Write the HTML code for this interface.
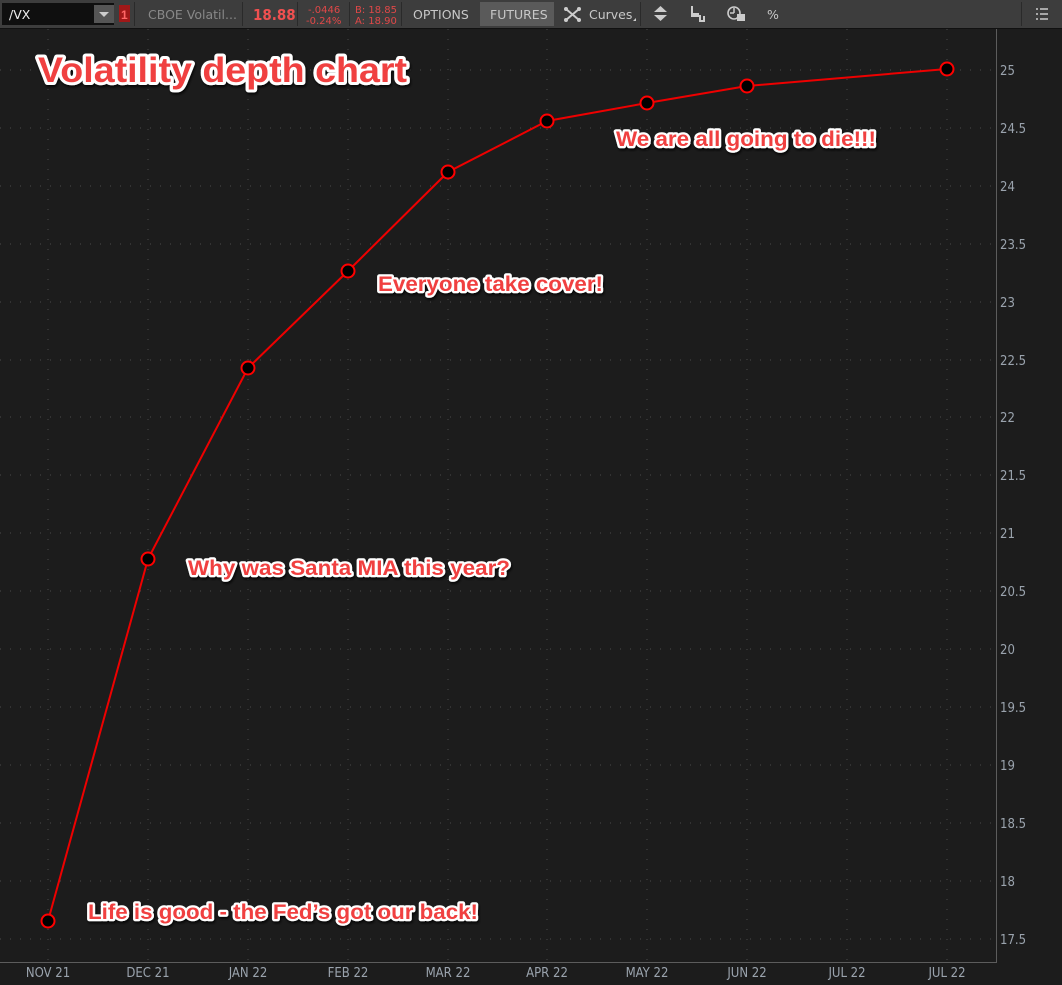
<!DOCTYPE html>
<html><head><meta charset="utf-8"><style>
html,body{margin:0;padding:0;background:#1b1b1b;width:1062px;height:985px;overflow:hidden;font-family:"Liberation Sans",sans-serif}
svg{display:block}
.ann{font-family:"Liberation Sans",sans-serif;font-weight:bold;fill:#f04040;stroke:#fff;stroke-width:4.5px;paint-order:stroke;stroke-linejoin:round;filter:url(#sh)}
.ax{font-family:"DejaVu Sans Condensed","Liberation Sans",sans-serif;font-size:13px;fill:#9aa3ad}
.tb{font-family:"DejaVu Sans","Liberation Sans",sans-serif;font-size:12.5px;fill:#c8c8c8}
</style></head><body>
<svg width="1062" height="985" viewBox="0 0 1062 985">
<defs><filter id="sh" x="-10%" y="-30%" width="120%" height="160%"><feDropShadow dx="1" dy="2" stdDeviation="1.2" flood-color="#000" flood-opacity="0.8"/></filter></defs>
<rect width="1062" height="985" fill="#1c1c1c"/>
<rect x="0" y="0" width="1062" height="28" fill="#3d3d3d"/>
<rect x="0" y="28" width="1062" height="1" fill="#111"/>
<rect x="2" y="3" width="112" height="22" fill="#0f0f0f"/>
<text x="9" y="19" class="tb" style="fill:#eee">/VX</text>
<rect x="94" y="5" width="20" height="18" fill="#555"/>
<path d="M99 12 L109 12 L104 17Z" fill="#ccc"/>
<rect x="119" y="5" width="11" height="17" fill="#a01818"/>
<text x="121" y="19" style="font:bold 12px 'Liberation Sans';fill:#f66">1</text>
<rect x="134" y="2" width="1" height="24" fill="#2a2a2a"/>
<text x="148" y="19" class="tb" style="fill:#888">CBOE Volatil...</text>
<rect x="242" y="2" width="1" height="24" fill="#2a2a2a"/>
<text x="253" y="20" style="font:bold 15px 'DejaVu Sans Condensed',sans-serif;fill:#f05050">18.88</text>
<rect x="297" y="2" width="1" height="24" fill="#2a2a2a"/>
<text x="308" y="13" style="font:10px 'DejaVu Sans',sans-serif;fill:#e04848">-.0446</text>
<text x="306" y="24" style="font:10px 'DejaVu Sans',sans-serif;fill:#e04848">-0.24%</text>
<rect x="349" y="2" width="1" height="24" fill="#2a2a2a"/>
<text x="355" y="13" style="font:10px 'DejaVu Sans',sans-serif;fill:#e04848">B: 18.85</text>
<text x="355" y="24" style="font:10px 'DejaVu Sans',sans-serif;fill:#e04848">A: 18.90</text>
<rect x="401" y="2" width="1" height="24" fill="#2a2a2a"/>
<text x="413" y="19" class="tb">OPTIONS</text>
<rect x="480" y="2" width="74" height="24" fill="#5a5a5a"/>
<text x="490" y="19" class="tb">FUTURES</text>
<path d="M566 9 L579 20 M579 9 L566 20" stroke="#ccc" stroke-width="2"/>
<circle cx="566" cy="9" r="2" fill="#ccc"/><circle cx="579" cy="9" r="2" fill="#ccc"/><circle cx="566" cy="20" r="2" fill="#ccc"/><circle cx="579" cy="20" r="2" fill="#ccc"/>
<text x="589" y="19" class="tb">Curves</text>
<path d="M633 21 L636 21 L636 18Z" fill="#ccc"/>
<rect x="640" y="2" width="1" height="24" fill="#2a2a2a"/>
<path d="M654 12 L667 12 L660.5 6Z M654 15 L667 15 L660.5 21Z" fill="#ccc"/>
<path d="M692 6 V16 H700 V21 H704 V16" stroke="#ccc" stroke-width="2" fill="none"/><rect x="691" y="13" width="8" height="3" fill="#ccc"/>
<circle cx="734" cy="13" r="6" stroke="#ccc" stroke-width="1.6" fill="none"/><path d="M734 13V8M734 13H730" stroke="#ccc" stroke-width="1.5"/><rect x="737" y="14" width="8" height="7" fill="#ccc"/>
<text x="767" y="19" class="tb">%</text>
<rect x="1021" y="2" width="1" height="24" fill="#2a2a2a"/>
<path d="M1036 9h2M1040 9h8M1036 14h2M1040 14h8M1036 19h2M1040 19h8" stroke="#ccc" stroke-width="1.6"/>
<g stroke="#4a4a4a" stroke-width="1" stroke-dasharray="1 9">
<path d="M48 29V963M148 29V963M248 29V963M348 29V963M448 29V963M547 29V963M647 29V963M747 29V963M847 29V963M947 29V963"/>
<path d="M0 70H996M0 128H996M0 186H996M0 244H996M0 302H996M0 360H996M0 417H996M0 475H996M0 533H996M0 591H996M0 649H996M0 707H996M0 765H996M0 823H996M0 881H996M0 939H996"/>
</g>
<rect x="996" y="29" width="1" height="934" fill="#5c5c5c"/>
<rect x="0" y="962" width="997" height="1" fill="#5c5c5c"/>
<g class="ax">
<text x="1000" y="75">25</text><text x="1000" y="133">24.5</text><text x="1000" y="191">24</text><text x="1000" y="249">23.5</text><text x="1000" y="307">23</text><text x="1000" y="365">22.5</text><text x="1000" y="422">22</text><text x="1000" y="480">21.5</text><text x="1000" y="538">21</text><text x="1000" y="596">20.5</text><text x="1000" y="654">20</text><text x="1000" y="712">19.5</text><text x="1000" y="770">19</text><text x="1000" y="828">18.5</text><text x="1000" y="886">18</text><text x="1000" y="944">17.5</text>
</g>
<g class="ax" text-anchor="middle">
<text x="48" y="977">NOV 21</text><text x="148" y="977">DEC 21</text><text x="248" y="977">JAN 22</text><text x="348" y="977">FEB 22</text><text x="448" y="977">MAR 22</text><text x="547" y="977">APR 22</text><text x="647" y="977">MAY 22</text><text x="747" y="977">JUN 22</text><text x="847" y="977">JUL 22</text><text x="947" y="977">JUL 22</text>
</g>
<polyline points="48,921 148,559 248,368 348,271 448,172 547,121 647,103 747,86 947,69" fill="none" stroke="#e00" stroke-width="2"/>
<g fill="#000" stroke="#f00" stroke-width="2">
<circle cx="48" cy="921" r="6.5"/><circle cx="148" cy="559" r="6.5"/><circle cx="248" cy="368" r="6.5"/><circle cx="348" cy="271" r="6.5"/><circle cx="448" cy="172" r="6.5"/><circle cx="547" cy="121" r="6.5"/><circle cx="647" cy="103" r="6.5"/><circle cx="747" cy="86" r="6.5"/><circle cx="947" cy="69" r="6.5"/>
</g>
<text class="ann" x="38" y="82" font-size="35" textLength="369" lengthAdjust="spacingAndGlyphs" style="stroke-width:6px">Volatility depth chart</text>
<text class="ann" x="616" y="146" font-size="21" textLength="260" lengthAdjust="spacingAndGlyphs">We are all going to die!!!</text>
<text class="ann" x="378" y="291" font-size="21" textLength="225" lengthAdjust="spacingAndGlyphs">Everyone take cover!</text>
<text class="ann" x="188" y="575" font-size="21" textLength="322" lengthAdjust="spacingAndGlyphs">Why was Santa MIA this year?</text>
<text class="ann" x="88" y="919" font-size="21" textLength="390" lengthAdjust="spacingAndGlyphs">Life is good - the Fed’s got our back!</text>
</svg>
</body></html>
